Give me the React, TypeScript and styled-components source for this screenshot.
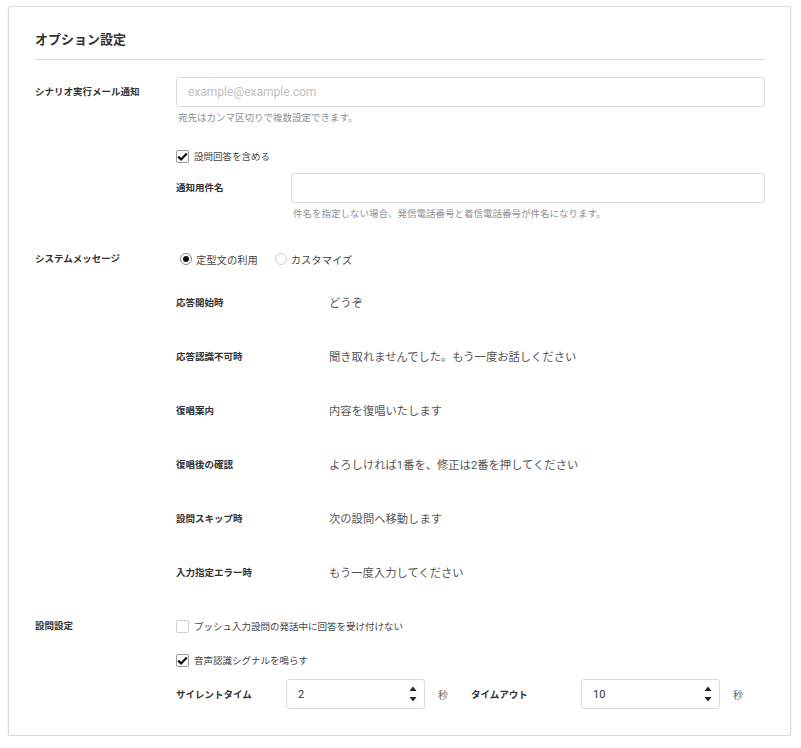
import React from "react";
import styled, { createGlobalStyle } from "styled-components";

const GlobalStyle = createGlobalStyle`
  body {
    margin: 0;
    background: #fff;
    font-family: Roboto, "Noto Sans CJK JP", sans-serif;
    color: #333;
  }
`;

const messages = [
  { label: "応答開始時", value: "どうぞ" },
  { label: "応答認識不可時", value: "聞き取れませんでした。もう一度お話しください" },
  { label: "復唱案内", value: "内容を復唱いたします" },
  { label: "復唱後の確認", value: "よろしければ1番を、修正は2番を押してください" },
  { label: "設問スキップ時", value: "次の設問へ移動します" },
  { label: "入力指定エラー時", value: "もう一度入力してください" },
];

const Check = ({ checked }: { checked?: boolean }) => (
  <CheckBox checked={checked}>
    {checked && (
      <svg width="11" height="9" viewBox="0 0 11 9">
        <path d="M1.2 4.6 L4.1 7.4 L9.8 1.4" fill="none" stroke="#111" strokeWidth="2.2" />
      </svg>
    )}
  </CheckBox>
);

const Spinner = () => (
  <svg width="8" height="18" viewBox="0 0 8 18">
    <path d="M0.5 6 L4 1.5 L7.5 6 Z" fill="#222" />
    <path d="M0.5 12 L4 16.5 L7.5 12 Z" fill="#222" />
  </svg>
);

const NumberField = ({ value }: { value: string }) => (
  <NumberBox>
    <NumberInput defaultValue={value} />
    <Spinner />
  </NumberBox>
);

const App = () => {
  return (
    <>
      <GlobalStyle />
      <Card>
        <Title>オプション設定</Title>
        <Divider />

        <Section>
          <SectionLabel>シナリオ実行メール通知</SectionLabel>
          <Content>
            <TextInput placeholder="example@example.com" />
            <Help>宛先はカンマ区切りで複数設定できます。</Help>
            <CheckRow gap={22}>
              <Check checked />
              <span>設問回答を含める</span>
            </CheckRow>
            <SubRow>
              <SubLabel>通知用件名</SubLabel>
              <Grow>
                <TextInput />
                <Help>件名を指定しない場合、発信電話番号と着信電話番号が件名になります。</Help>
              </Grow>
            </SubRow>
          </Content>
        </Section>

        <Section gap={29}>
          <SectionLabel line={18}>システムメッセージ</SectionLabel>
          <Content>
            <RadioGroup>
              <RadioItem>
                <Radio checked />
                定型文の利用
              </RadioItem>
              <RadioItem>
                <Radio />
                カスタマイズ
              </RadioItem>
            </RadioGroup>
            <MessageList>
              {messages.map((m) => (
                <MessageRow key={m.label}>
                  <MessageLabel>{m.label}</MessageLabel>
                  <MessageValue>{m.value}</MessageValue>
                </MessageRow>
              ))}
            </MessageList>
          </Content>
        </Section>

        <Section gap={35}>
          <SectionLabel line={18}>設問設定</SectionLabel>
          <Content>
            <CheckRow>
              <Check />
              <span>プッシュ入力設問の発話中に回答を受け付けない</span>
            </CheckRow>
            <CheckRow gap={16}>
              <Check checked />
              <span>音声認識シグナルを鳴らす</span>
            </CheckRow>
            <NumberRow>
              <NumberLabel>サイレントタイム</NumberLabel>
              <NumberField value="2" />
              <Unit>秒</Unit>
              <NumberLabel>タイムアウト</NumberLabel>
              <NumberField value="10" />
              <Unit>秒</Unit>
            </NumberRow>
          </Content>
        </Section>
      </Card>
    </>
  );
};

export default App;

const Card = styled.div`
  box-sizing: border-box;
  width: 783px;
  margin: 6px 0 0 8px;
  padding: 23px 25px 26px 26px;
  border: 1px solid #dcdcdc;
  border-radius: 2px;
  box-shadow: 0 1px 2px rgba(0, 0, 0, 0.12);
  background: #fff;
`;

const Title = styled.h2`
  margin: 0;
  font-size: 13px;
  line-height: 20px;
  font-weight: 700;
  color: #333;
`;

const Divider = styled.div`
  height: 1px;
  background: #dedede;
  margin: 9px 0 17px;
`;

const Section = styled.div<{ gap?: number }>`
  display: flex;
  margin-top: ${(p) => p.gap ?? 0}px;
`;

const SectionLabel = styled.div<{ line?: number }>`
  width: 141px;
  flex-shrink: 0;
  font-size: 9.5px;
  font-weight: 700;
  line-height: ${(p) => p.line ?? 30}px;
  color: #333;
`;

const Content = styled.div`
  flex: 1;
  display: flex;
  flex-direction: column;
`;

const Grow = styled.div`
  flex: 1;
  display: flex;
  flex-direction: column;
`;

const TextInput = styled.input`
  box-sizing: border-box;
  width: 100%;
  height: 30px;
  padding: 0 11px;
  border: 1px solid #dcdcdc;
  border-radius: 3px;
  font-family: Roboto, "Noto Sans CJK JP", sans-serif;
  font-size: 12px;
  color: #333;
  outline: none;
  &::placeholder {
    color: #c0c0c0;
  }
`;

const Help = styled.div`
  margin-top: 4px;
  padding-left: 2px;
  font-size: 9.5px;
  line-height: 14px;
  color: #8a8f96;
`;

const CheckRow = styled.label<{ gap?: number }>`
  display: flex;
  align-items: center;
  gap: 5px;
  height: 18px;
  margin-top: ${(p) => p.gap ?? 0}px;
  font-size: 9.5px;
  color: #444;
`;

const CheckBox = styled.span<{ checked?: boolean }>`
  box-sizing: border-box;
  width: 13px;
  height: 13px;
  display: inline-flex;
  align-items: center;
  justify-content: center;
  border: 1px solid ${(p) => (p.checked ? "#9a9a9a" : "#cfcfcf")};
  border-radius: 2px;
  background: #fff;
`;

const SubRow = styled.div`
  display: flex;
  margin-top: 8px;
`;

const SubLabel = styled.div`
  width: 115px;
  flex-shrink: 0;
  font-size: 9.5px;
  font-weight: 700;
  line-height: 30px;
  color: #333;
`;

const RadioGroup = styled.div`
  display: flex;
  gap: 17px;
  height: 18px;
  padding-left: 4px;
`;

const RadioItem = styled.label`
  display: flex;
  align-items: center;
  gap: 4px;
  font-size: 10.3px;
  color: #444;
`;

const Radio = styled.span<{ checked?: boolean }>`
  box-sizing: border-box;
  width: 12px;
  height: 12px;
  border-radius: 50%;
  border: 1px solid ${(p) => (p.checked ? "#8a8a8a" : "#d0d0d0")};
  display: inline-flex;
  align-items: center;
  justify-content: center;
  &::after {
    content: "";
    width: 6px;
    height: 6px;
    border-radius: 50%;
    background: ${(p) => (p.checked ? "#111" : "transparent")};
  }
`;

const MessageList = styled.div`
  display: flex;
  flex-direction: column;
  gap: 34px;
  margin-top: 24px;
`;

const MessageRow = styled.div`
  display: flex;
  align-items: center;
  height: 20px;
`;

const MessageLabel = styled.div`
  width: 153px;
  flex-shrink: 0;
  font-size: 9.5px;
  font-weight: 700;
  color: #333;
`;

const MessageValue = styled.div`
  font-size: 11.3px;
  color: #555;
`;

const NumberRow = styled.div`
  display: flex;
  align-items: center;
  margin-top: 10px;
  height: 30px;
`;

const NumberLabel = styled.div`
  width: 110px;
  flex-shrink: 0;
  font-size: 9.5px;
  font-weight: 700;
  color: #333;
`;

const NumberBox = styled.div`
  box-sizing: border-box;
  width: 139px;
  height: 30px;
  display: flex;
  align-items: center;
  padding: 0 7px 0 11px;
  border: 1px solid #dcdcdc;
  border-radius: 3px;
`;

const NumberInput = styled.input`
  flex: 1;
  min-width: 0;
  border: none;
  outline: none;
  padding: 0;
  font-family: Roboto, "Noto Sans CJK JP", sans-serif;
  font-size: 11px;
  color: #333;
`;

const Unit = styled.span`
  margin: 0 23px 0 13px;
  font-size: 10px;
  color: #666;
`;
